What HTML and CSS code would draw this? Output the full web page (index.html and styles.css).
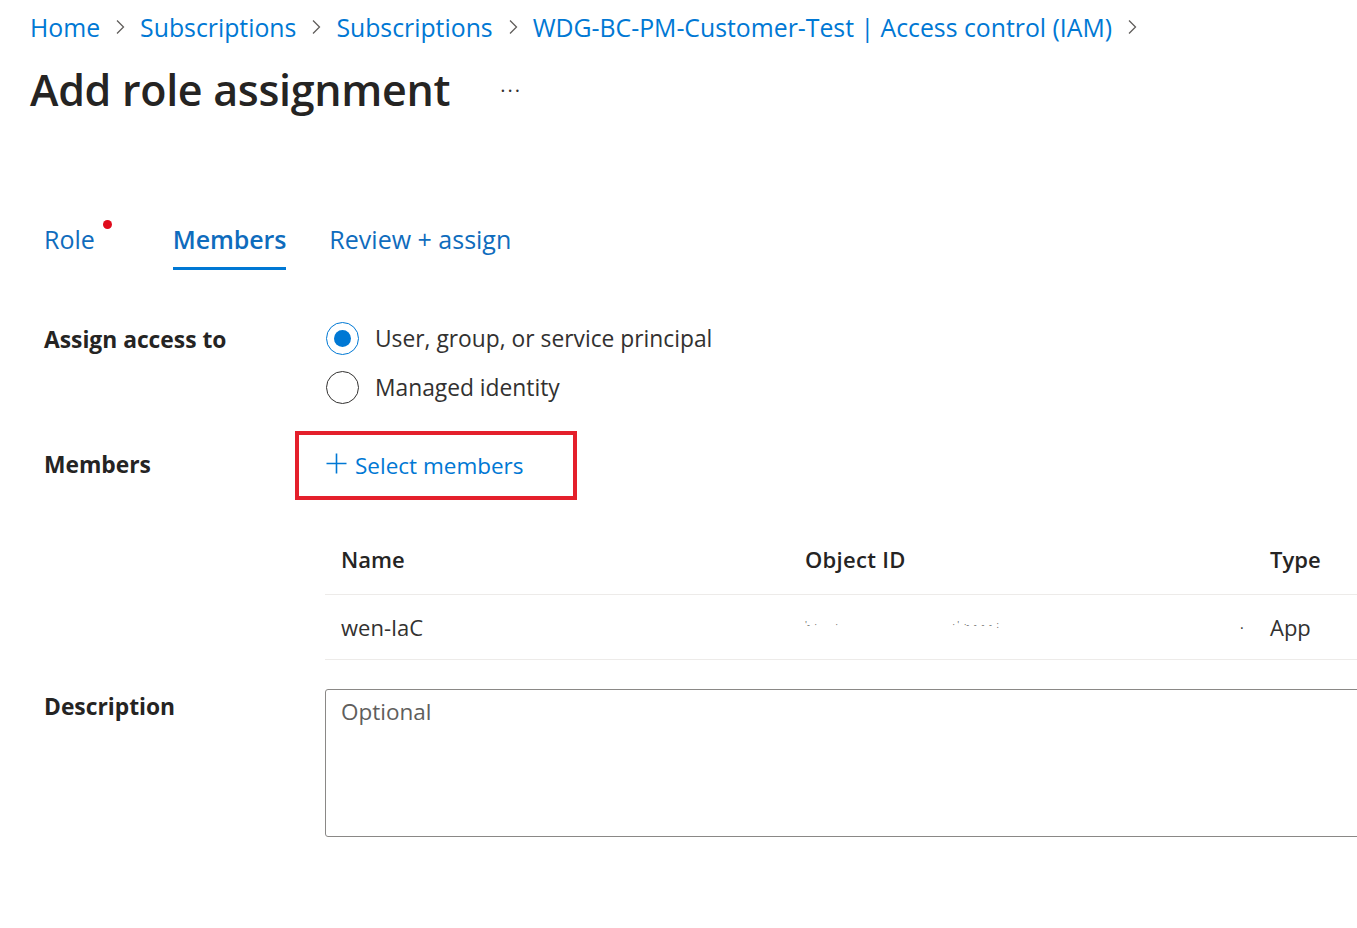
FILE: index.html
```html
<!DOCTYPE html>
<html lang="en">
<head>
<meta charset="utf-8">
<title>Add role assignment</title>
<link rel="stylesheet" href="styles.css">
</head>
<body>
<div class="page">
  <nav class="breadcrumb">
    <a class="crumb">Home</a>
    <svg class="chev" width="10" height="16" viewBox="0 0 10 16"><path d="M2 1.5 L8.5 8 L2 14.5" fill="none" stroke="#605e5c" stroke-width="1.3"/></svg>
    <a class="crumb">Subscriptions</a>
    <svg class="chev" width="10" height="16" viewBox="0 0 10 16"><path d="M2 1.5 L8.5 8 L2 14.5" fill="none" stroke="#605e5c" stroke-width="1.3"/></svg>
    <a class="crumb">Subscriptions</a>
    <svg class="chev" width="10" height="16" viewBox="0 0 10 16"><path d="M2 1.5 L8.5 8 L2 14.5" fill="none" stroke="#605e5c" stroke-width="1.3"/></svg>
    <a class="crumb">WDG-BC-PM-Customer-Test | Access control (IAM)</a>
    <svg class="chev" width="10" height="16" viewBox="0 0 10 16"><path d="M2 1.5 L8.5 8 L2 14.5" fill="none" stroke="#605e5c" stroke-width="1.3"/></svg>
  </nav>

  <header class="title-row">
    <h1 class="title">Add role assignment</h1>
    <span class="more">···</span>
  </header>

  <div class="content">
    <div class="tabs">
      <div class="tab">Role<span class="dot"></span></div>
      <div class="tab active">Members</div>
      <div class="tab">Review + assign</div>
    </div>

    <div class="form">
      <div class="label first-label">Assign access to</div>
      <div class="radios">
        <div class="radio-row"><span class="radio checked"></span><span>User, group, or service principal</span></div>
        <div class="radio-row"><span class="radio"></span><span>Managed identity</span></div>
      </div>

      <div class="label members-label">Members</div>
      <div class="members-cell">
        <div class="select-box">
          <span class="select-btn">
            <svg width="21" height="21" viewBox="0 0 21 21"><path d="M10.5 0.5 V20.5 M0.5 10.5 H20.5" stroke="#0078d4" stroke-width="1.6" fill="none"/></svg>
            <span>Select members</span>
          </span>
        </div>
      </div>

      <div class="label"></div>
      <div class="table">
        <div class="tr th">
          <div class="c1">Name</div>
          <div class="c2">Object ID</div>
          <div class="c3">Type</div>
        </div>
        <div class="tr td">
          <div class="c1">wen-IaC</div>
          <div class="c2"><span class="redact">'-  ·        ·                                                 · '  ·-  -  -  -  :</span><span class="redact2">.</span></div>
          <div class="c3">App</div>
        </div>
      </div>

      <div class="label desc-label">Description</div>
      <div class="desc-cell">
        <div class="textarea">Optional</div>
      </div>
    </div>
  </div>
</div>
</body>
</html>
```

FILE: styles.css
```css
html, body {
  margin: 0;
  padding: 0;
  background: #ffffff;
}
body {
  font-family: "Open Sans", "Noto Sans", "Liberation Sans", sans-serif;
  color: #323130;
  overflow: hidden;
  width: 1357px;
  height: 928px;
}
.page {
  padding-left: 30px;
}
.breadcrumb {
  display: flex;
  align-items: center;
  gap: 15px;
  height: 30px;
  padding-top: 12px;
  font-size: 24.8px;
  line-height: 30px;
}
.crumb {
  color: #0078d4;
  text-decoration: none;
  white-space: nowrap;
}
.chev {
  display: block;
}
.title-row {
  display: flex;
  align-items: center;
  margin-top: 20px;
  height: 56px;
}
.title {
  margin: 0;
  font-size: 43px;
  font-weight: 600;
  line-height: 56px;
  color: #252423;
  letter-spacing: -0.3px;
}
.more {
  margin-left: 50px;
  font-size: 20px;
  color: #323130;
  letter-spacing: 2px;
}
.content {
  padding-left: 14px;
}
.tabs {
  display: flex;
  margin-top: 101px;
  height: 60px;
}
.tab {
  position: relative;
  font-size: 25px;
  color: #0f6cbd;
  line-height: 40px;
  height: 51px;
  box-sizing: border-box;
  margin-right: 43px;
}
.tab:first-child {
  margin-right: 78px;
}
.tab.active {
  font-weight: 600;
  border-bottom: 3px solid #0078d4;
  letter-spacing: -0.1px;
}
.dot {
  position: absolute;
  right: -17px;
  top: 1px;
  width: 9px;
  height: 9px;
  border-radius: 50%;
  background: #e00b1c;
}
.form {
  display: grid;
  grid-template-columns: 281px 1032px;
  margin-top: 43px;
}
.label {
  font-size: 22.8px;
  font-weight: 700;
  color: #252423;
  line-height: 30px;
}
.first-label {
  padding-top: 3px;
}
.radios {
  display: flex;
  flex-direction: column;
  gap: 16px;
}
.radio-row {
  display: flex;
  align-items: center;
  gap: 16px;
  font-size: 22.8px;
  line-height: 30px;
  color: #323130;
  padding-left: 1px;
}
.radio {
  box-sizing: border-box;
  width: 33px;
  height: 33px;
  border-radius: 50%;
  border: 1.5px solid #323130;
  display: flex;
  align-items: center;
  justify-content: center;
}
.radio.checked {
  border-color: #0078d4;
}
.radio.checked::after {
  content: "";
  width: 17px;
  height: 17px;
  border-radius: 50%;
  background: #0078d4;
}
.members-label {
  margin-top: 46px;
}
.members-cell {
  margin-top: 27px;
}
.select-box {
  margin-left: -30px;
  width: 282px;
  height: 69px;
  box-sizing: border-box;
  border: 4px solid #e4202b;
  display: flex;
  align-items: center;
  padding-left: 27px;
}
.select-btn {
  display: flex;
  align-items: center;
  gap: 8px;
  color: #0078d4;
  font-size: 22.5px;
  line-height: 30px;
}
.select-btn svg {
  margin-top: -4px;
}
.table {
  margin-top: 31px;
  font-size: 22px;
}
.tr {
  display: flex;
  align-items: center;
  box-sizing: border-box;
  border-bottom: 1.5px solid #edebe9;
}
.th {
  height: 64px;
  padding-bottom: 7px;
  font-weight: 600;
  color: #252423;
}
.td {
  height: 65px;
  color: #323130;
}
.c1 {
  width: 464px;
  padding-left: 16px;
}
.c2 {
  width: 465px;
  position: relative;
  white-space: nowrap;
}
.th .c2 {
  letter-spacing: 0.3px;
}
.c3 {
  flex: 1;
}
.redact {
  font-size: 9px;
  color: #605e5c;
  white-space: pre;
  position: relative;
  top: -8px;
}
.redact2 {
  position: absolute;
  left: 435px;
  top: 2px;
  font-size: 14px;
  color: #323130;
}
.desc-label {
  margin-top: 32px;
}
.desc-cell {
  margin-top: 29px;
  overflow: hidden;
}
.textarea {
  box-sizing: border-box;
  width: 1100px;
  height: 148px;
  border: 1.5px solid #8a8886;
  border-radius: 3px;
  padding: 6px 15px;
  font-size: 22.5px;
  line-height: 32px;
  color: #605e5c;
}
```
